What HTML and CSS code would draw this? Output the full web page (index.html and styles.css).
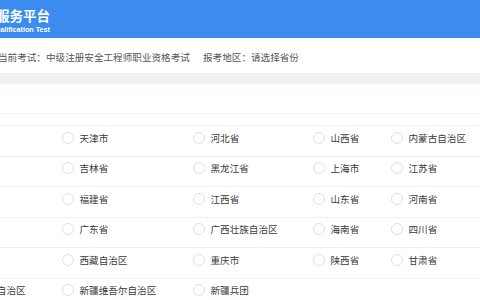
FILE: index.html
```html
<!DOCTYPE html>
<html lang="zh-CN">
<head>
    <meta charset="UTF-8">
    <meta name="viewport" content="width=device-width, initial-scale=1.0">
    <title>考试服务平台</title>
    <link rel="stylesheet" href="styles.css">
</head>
<body>
    <div class="page">
        <!-- 顶部标题栏 -->
        <div class="header">
            <div class="brand">
                <div class="brand-title">考试服务平台</div>
                <div class="brand-sub">Qualification Test</div>
            </div>
        </div>

        <!-- 当前考试信息 -->
        <div class="info">
            <span>当前考试：中级注册安全工程师职业资格考试</span>
            <span class="info-area">报考地区：请选择省份</span>
        </div>

        <div class="strip"></div>

        <!-- 省份选择 -->
        <div class="panel">
            <div class="panel-head"></div>
            <div class="province-list">
                <div class="row">
                    <label class="item"><span class="radio"></span>北京市</label>
                    <label class="item"><span class="radio"></span>天津市</label>
                    <label class="item"><span class="radio"></span>河北省</label>
                    <label class="item"><span class="radio"></span>山西省</label>
                    <label class="item"><span class="radio"></span>内蒙古自治区</label>
                </div>
                <div class="row">
                    <label class="item"><span class="radio"></span>辽宁省</label>
                    <label class="item"><span class="radio"></span>吉林省</label>
                    <label class="item"><span class="radio"></span>黑龙江省</label>
                    <label class="item"><span class="radio"></span>上海市</label>
                    <label class="item"><span class="radio"></span>江苏省</label>
                </div>
                <div class="row">
                    <label class="item"><span class="radio"></span>安徽省</label>
                    <label class="item"><span class="radio"></span>福建省</label>
                    <label class="item"><span class="radio"></span>江西省</label>
                    <label class="item"><span class="radio"></span>山东省</label>
                    <label class="item"><span class="radio"></span>河南省</label>
                </div>
                <div class="row">
                    <label class="item"><span class="radio"></span>湖南省</label>
                    <label class="item"><span class="radio"></span>广东省</label>
                    <label class="item"><span class="radio"></span>广西壮族自治区</label>
                    <label class="item"><span class="radio"></span>海南省</label>
                    <label class="item"><span class="radio"></span>四川省</label>
                </div>
                <div class="row">
                    <label class="item"><span class="radio"></span>云南省</label>
                    <label class="item"><span class="radio"></span>西藏自治区</label>
                    <label class="item"><span class="radio"></span>重庆市</label>
                    <label class="item"><span class="radio"></span>陕西省</label>
                    <label class="item"><span class="radio"></span>甘肃省</label>
                </div>
                <div class="row">
                    <label class="item"><span class="radio"></span>宁夏回族自治区</label>
                    <label class="item"><span class="radio"></span>新疆维吾尔自治区</label>
                    <label class="item"><span class="radio"></span>新疆兵团</label>
                </div>
            </div>
        </div>
    </div>
</body>
</html>
```

FILE: styles.css
```css
body {
    margin: 0;
    background-color: white;
    font-family: "Noto Sans CJK SC", "Liberation Sans", sans-serif;
    overflow: hidden;
}
.page {
    margin-left: -80px;
    width: 640px;
}
.header {
    height: 38px;
    background-color: #3b8cee;
    padding-left: 49px;
    box-sizing: border-box;
    padding-top: 2px;
}
.brand {
    display: inline-flex;
    flex-direction: column;
    align-items: flex-end;
    color: white;
}
.brand-title {
    font-size: 13.5px;
    font-weight: bold;
    line-height: 20px;
}
.brand-sub {
    font-family: "Liberation Sans", sans-serif;
    font-size: 7.2px;
    font-weight: bold;
    line-height: 9px;
}
.info {
    height: 32px;
    line-height: 32px;
    padding-top: 3px;
    padding-left: 78px;
    font-size: 9.6px;
    color: #555;
}
.info-area {
    margin-left: 11px;
}
.strip {
    height: 11px;
    background-color: #eff1f4;
}
.panel-head {
    height: 29px;
    border-bottom: 1px solid #f2f2f2;
}
.province-list {
    padding-top: 11px;
}
.row {
    display: grid;
    grid-template-columns: 121px 131px 120px 78px 1fr;
    padding-left: 21px;
    height: 30.5px;
    box-sizing: border-box;
    border-top: 1px solid #ebeef5;
    padding-top: 5px;
}
.item {
    display: flex;
    align-items: center;
    height: 13px;
    font-size: 9.6px;
    color: #3a3a3a;
    white-space: nowrap;
}
.radio {
    width: 12px;
    height: 12px;
    border: 1px solid #dcdfe6;
    border-radius: 50%;
    box-sizing: border-box;
    margin-right: 5.5px;
    flex-shrink: 0;
}
```
